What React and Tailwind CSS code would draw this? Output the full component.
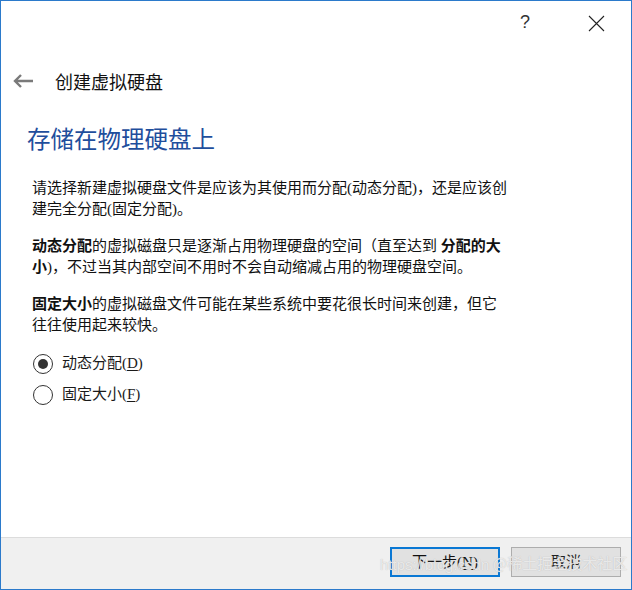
import React, { useState } from "react";

const BODY_FONT = { fontFamily: '"Liberation Serif", "Noto Sans CJK SC", serif' };
const UI_FONT = { fontFamily: '"Noto Sans CJK SC", "Noto Sans", sans-serif' };

function Radio({ checked, label, hotkey, onSelect }) {
  return (
    <div className="flex items-center h-[31px] cursor-default" onClick={onSelect}>
      <div className="w-[20px] h-[20px] rounded-full border border-[#333333] flex items-center justify-center bg-white">
        {checked && <div className="w-[10px] h-[10px] rounded-full bg-[#333333]" />}
      </div>
      <span className="ml-[9px] text-[15px] text-[#1a1a1a]" style={BODY_FONT}>
        {label}(<span className="underline underline-offset-2">{hotkey}</span>)
      </span>
    </div>
  );
}

export default function App() {
  const [mode, setMode] = useState("dynamic");

  return (
    <div className="w-[632px] h-[590px] border border-[#2b7acb] bg-white flex flex-col overflow-hidden">
      {/* title bar */}
      <div className="h-[44px] flex items-center justify-end pr-[26px]">
        <span className="text-[18px] text-[#333333] mr-[58px] mt-[-2px]" style={{ fontFamily: '"Liberation Sans", sans-serif' }}>?</span>
        <svg width="17" height="17" viewBox="0 0 17 17">
          <path d="M1 1 L16 16 M16 1 L1 16" stroke="#222222" strokeWidth="1.1" fill="none" />
        </svg>
      </div>

      {/* wizard header */}
      <div className="mt-[24px] h-[24px] flex items-center">
        <svg className="ml-[11px]" width="22" height="16" viewBox="0 0 22 16">
          <path d="M21 8 H3 M9 2 L3 8 L9 14" stroke="#7a7a7a" strokeWidth="2.4" fill="none" />
        </svg>
        <span className="ml-[21px] text-[18px] text-[#111111]" style={UI_FONT}>创建虚拟硬盘</span>
      </div>

      <h1 className="mt-[30px] ml-[26px] h-[30px] leading-[30px] text-[23.5px] text-[#1f4e9c]" style={UI_FONT}>
        存储在物理硬盘上
      </h1>

      <div className="ml-[31px] text-[15px] leading-[21px] text-[#111111]" style={BODY_FONT}>
        <p className="mt-[25px]">
          请选择新建虚拟硬盘文件是应该为其使用而分配(动态分配)，还是应该创
          <br />
          建完全分配(固定分配)。
        </p>
        <p className="mt-[16px]">
          <b>动态分配</b>的虚拟磁盘只是逐渐占用物理硬盘的空间（直至达到 <b>分配的大</b>
          <br />
          <b>小</b>)，不过当其内部空间不用时不会自动缩减占用的物理硬盘空间。
        </p>
        <p className="mt-[16px]">
          <b>固定大小</b>的虚拟磁盘文件可能在某些系统中要花很长时间来创建，但它
          <br />
          往往使用起来较快。
        </p>
      </div>

      <div className="mt-[12px] ml-[32px] flex flex-col">
        <Radio checked={mode === "dynamic"} label="动态分配" hotkey="D" onSelect={() => setMode("dynamic")} />
        <Radio checked={mode === "fixed"} label="固定大小" hotkey="F" onSelect={() => setMode("fixed")} />
      </div>

      <div className="flex-1" />

      {/* footer */}
      <div className="relative h-[52px] border-t border-[#dcdcdc] bg-[#f0f0f0] flex items-start justify-end pt-[9px] pr-[10px] gap-[11px]">
        <button
          className="w-[110px] h-[30px] border-2 border-[#0a78d4] bg-[#e1e1e1] text-[15px] text-[#111111] flex items-center justify-center"
          style={BODY_FONT}
        >
          下一步(<span className="underline underline-offset-2">N</span>)
        </button>
        <button
          className="w-[110px] h-[30px] border border-[#adadad] bg-[#e1e1e1] text-[15px] text-[#222222] flex items-center justify-center"
          style={BODY_FONT}
        >
          取消
        </button>

        {/* watermark */}
        <span
          className="absolute left-[379px] top-[16px] text-[15px] text-white/70 pointer-events-none whitespace-nowrap"
          style={{ fontFamily: '"Liberation Sans", sans-serif', textShadow: "0 0 1px #b0b0b0" }}
        >
          https://blog.csdn
        </span>
        <span
          className="absolute left-[492px] top-[14px] text-[15px] text-white/70 pointer-events-none whitespace-nowrap"
          style={{ ...UI_FONT, textShadow: "0 0 1px #b0b0b0" }}
        >
          @稀土掘金技术社区
        </span>
      </div>
    </div>
  );
}
